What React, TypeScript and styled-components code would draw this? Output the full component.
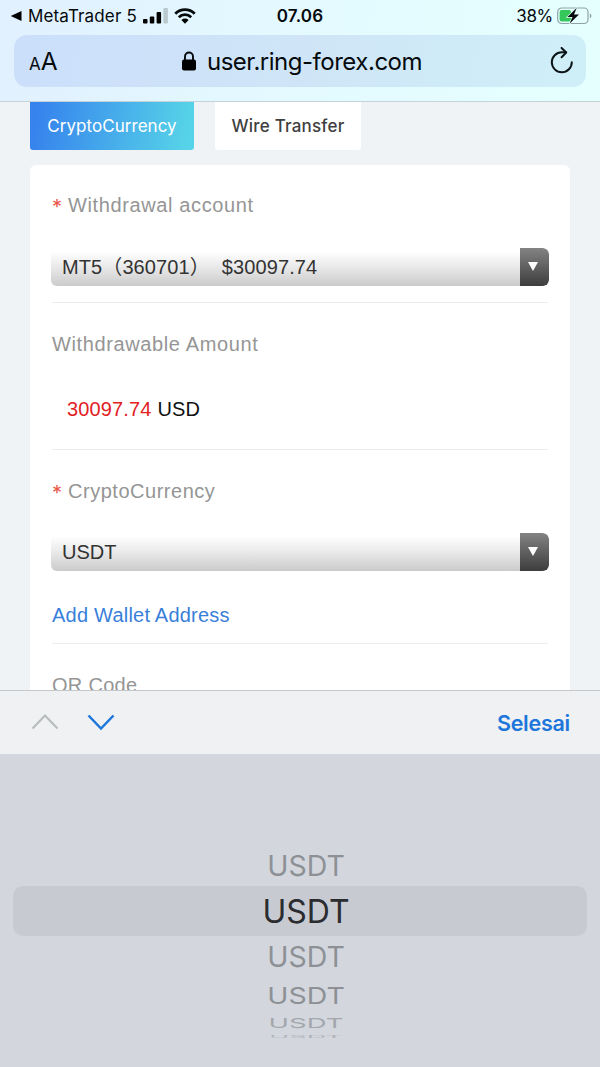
import React from "react";
import styled, { createGlobalStyle } from "styled-components";

const Global = createGlobalStyle`
  * { box-sizing: border-box; }
  body { margin: 0; background: #eff3f5; }
`;

const sans = `"Liberation Sans", "Noto Sans CJK SC", sans-serif`;
const system = `Inter, "Liberation Sans", sans-serif`;

const Screen = styled.div`
  width: 600px;
  height: 1067px;
  display: flex;
  flex-direction: column;
  overflow: hidden;
  background: #eff3f5;
  font-family: ${sans};
`;

const Header = styled.header`
  height: 102px;
  flex: none;
  padding: 0 14px;
  border-bottom: 1px solid #c3d3d9;
  background: linear-gradient(100deg, #e1f0fe 0%, #e3f9ff 45%, #e5fffe 100%);
  font-family: ${system};
  color: #050a0d;
`;

const StatusBar = styled.div`
  height: 35px;
  display: grid;
  grid-template-columns: 1fr auto 1fr;
  align-items: center;
  padding-bottom: 4px;
  margin: 0 -6px 0 -4px;
  font-size: 17px;
`;

const StatusSide = styled.div<{ $end?: boolean }>`
  display: flex;
  align-items: center;
  justify-content: ${(p) => (p.$end ? "flex-end" : "flex-start")};
  gap: ${(p) => (p.$end ? "4px" : "6px")};
  white-space: nowrap;
  letter-spacing: ${(p) => (p.$end ? "-0.3px" : "0.15px")};
`;

const Clock = styled.div`
  font-weight: 600;
  letter-spacing: 0.2px;
  margin-left: -2px;
`;

const AddressBar = styled.div`
  height: 52px;
  display: grid;
  grid-template-columns: 100px 1fr 100px;
  align-items: center;
  border-radius: 13px;
  padding: 0 11px 0 15px;
  background: linear-gradient(95deg, #cbdffb 0%, #cfe5f7 50%, #cfeff8 100%);
`;

const TextSize = styled.div`
  display: flex;
  align-items: baseline;
  font-size: 24.5px;
  letter-spacing: 0;
`;

const SmallA = styled.span`
  font-size: 17px;
`;

const Url = styled.div`
  display: flex;
  align-items: center;
  justify-content: center;
  gap: 11px;
  font-size: 24px;
  letter-spacing: -0.48px;
`;

const Reload = styled.div`
  display: flex;
  justify-content: flex-end;
`;

const Page = styled.main`
  height: 588px;
  flex: none;
  overflow: hidden;
  padding: 0 30px;
`;

const Tabs = styled.div`
  display: flex;
  gap: 21px;
  margin-bottom: 15px;
`;

const Tab = styled.div<{ $active?: boolean; $w: number }>`
  width: ${(p) => p.$w}px;
  height: 48px;
  display: flex;
  align-items: center;
  justify-content: center;
  border-radius: 0 0 3px 3px;
  font-family: ${system};
  font-size: 17px;
  font-weight: ${(p) => (p.$active ? 400 : 500)};
  letter-spacing: ${(p) => (p.$active ? 0.05 : 0.2)}px;
  color: ${(p) => (p.$active ? "#fff" : "#404040")};
  background: ${(p) => (p.$active ? "linear-gradient(100deg, #3683ed 5%, #56d3e8 95%)" : "#fff")};
`;

const Card = styled.section`
  padding: 0 22px;
  border-radius: 6px 6px 0 0;
  background: #fff;
`;

const Field = styled.div<{ $pad?: number }>`
  padding-bottom: ${(p) => p.$pad ?? 16}px;
  border-bottom: 1px solid #ebebeb;
`;

const Label = styled.div<{ $h?: number; $ls?: number }>`
  height: ${(p) => p.$h ?? 82}px;
  display: flex;
  align-items: center;
  gap: 6px;
  font-size: 20px;
  letter-spacing: ${(p) => p.$ls ?? 0.62}px;
  color: #959595;
`;

const Required = styled.span`
  width: 10px;
  padding-top: 3px;
  font-family: ${system};
  letter-spacing: 0;
  color: #e8594c;
`;

const Select = styled.div<{ $mt: number }>`
  height: 38px;
  margin: ${(p) => p.$mt}px -1px 0;
  display: flex;
  justify-content: space-between;
  align-items: center;
  padding-left: 11px;
  border-radius: 6px;
  overflow: hidden;
  white-space: pre;
  font-size: 20px;
  line-height: 24px;
  color: #333;
  background: linear-gradient(#fff 8%, #ececec 45%, #cbcbcb 100%);
`;

const Account = styled.div`
  display: flex;
  align-items: center;
  height: 38px;
  letter-spacing: 0.1px;
`;

const Balance = styled.span`
  margin-left: 12px;
`;

const Arrow = styled.div`
  width: 29px;
  height: 38px;
  display: flex;
  align-items: center;
  justify-content: center;
  padding: 0 4px 2px 0;
  border-radius: 0 6px 6px 0;
  background: linear-gradient(#838383, #3d3d3d);
`;

const Amount = styled.div`
  height: 48px;
  display: flex;
  align-items: center;
  gap: 6px;
  padding: 1px 0 0 15px;
  font-size: 20px;
  letter-spacing: 0.12px;
  color: #111;
`;

const Red = styled.span`
  color: #e2211f;
`;

const Link = styled.div`
  height: 34px;
  margin-top: 27px;
  display: flex;
  align-items: center;
  font-size: 20px;
  letter-spacing: 0.22px;
  color: #397fda;
`;

const Toolbar = styled.div`
  height: 64px;
  flex: none;
  display: flex;
  align-items: center;
  padding: 0 30px 0 31px;
  border-top: 1px solid #c5c8ca;
  background: #eff1f2;
`;

const Steps = styled.div`
  display: flex;
  gap: 28px;
  margin: 0 auto 2px 0;
`;

const Done = styled.div`
  font-family: ${system};
  font-size: 21.5px;
  font-weight: 600;
  letter-spacing: -0.25px;
  color: #1c76db;
`;

const Picker = styled.div`
  flex: 1;
  display: flex;
  flex-direction: column;
  padding: 90px 13px 0;
  background: #d3d7dd;
  font-family: ${system};
`;

const Option = styled.div<{ $h: number; $size?: number; $sy?: number; $color?: string; $on?: boolean }>`
  height: ${(p) => p.$h}px;
  display: flex;
  align-items: center;
  justify-content: center;
  border-radius: 10px;
  font-size: ${(p) => p.$size ?? 28.5}px;
  color: ${(p) => p.$color ?? "#8d9196"};
  background: ${(p) => (p.$on ? "#c8cad2" : "transparent")};
  & > span {
    padding-left: 12px;
    transform: scaleY(${(p) => p.$sy ?? 1});
  }
`;

const Down = () => (
  <Arrow>
    <svg width="10" height="9" viewBox="0 0 10 9"><path d="M0 0h10L5 9z" fill="#fff" /></svg>
  </Arrow>
);

export default function App() {
  return (
    <Screen>
      <Global />
      <Header>
        <StatusBar>
          <StatusSide>
            <svg width="12" height="12" viewBox="0 0 12 12"><path d="M11.5 1v10L.7 6z" /></svg>
            <span>MetaTrader 5</span>
            <svg width="25" height="16" viewBox="0 0 25 16">
              <rect x="0" y="11" width="4.500" height="4.500" rx="1" />
              <rect x="6.800" y="8.500" width="4.500" height="7" rx="1" />
              <rect x="13.600" y="4" width="4.500" height="11.500" rx="1" />
              <rect x="20.400" y="0" width="4.500" height="15.500" rx="1" fill="#b9c9ce" />
            </svg>
            <svg width="22" height="16" viewBox="0 0 22 16">
              <path d="M1.300 5.700a13.800 13.800 0 0 1 19.400 0M4.800 9.200a8.800 8.800 0 0 1 12.400 0" fill="none" stroke="#050a0d" strokeWidth="2.800" />
              <path d="M11 15.700 7.400 12a5.200 5.200 0 0 1 7.200 0z" />
            </svg>
          </StatusSide>
          <Clock>07.06</Clock>
          <StatusSide $end>
            <span>38%</span>
            <svg width="35" height="18" viewBox="0 0 35 18">
              <rect x=".7" y="1" width="30.300" height="15.500" rx="4" fill="none" stroke="#8fa3a6" strokeWidth="1.200" />
              <rect x="2.600" y="3" width="11.400" height="11.500" rx="2" fill="#35c759" />
              <path d="M32.800 6.500c2.200.8 2.200 4 0 4.700z" fill="#8fa3a6" />
              <path d="M19.800.8 10.500 10h5l-3 6.800L22 7.600h-5z" fill="#050a0d" stroke="#e5fffe" strokeWidth="1.400" paintOrder="stroke" />
            </svg>
          </StatusSide>
        </StatusBar>
        <AddressBar>
          <TextSize><SmallA>A</SmallA>A</TextSize>
          <Url>
            <svg width="14" height="20" viewBox="0 0 14 20">
              <rect x="0" y="8.500" width="14" height="11" rx="2" />
              <path d="M3 9V5.500a4 4 0 0 1 8 0V9" fill="none" stroke="#050a0d" strokeWidth="1.900" />
            </svg>
            <span>user.ring-forex.com</span>
          </Url>
          <Reload>
            <svg width="26" height="28" viewBox="0 0 26 28" fill="none" stroke="#0c1418" strokeWidth="2" strokeLinecap="round" strokeLinejoin="round">
              <path d="M22.800 15.200A10 10 0 1 1 12.800 5.300H17" />
              <path d="M12.600 1 17.200 5.500 12.600 10.200" />
            </svg>
          </Reload>
        </AddressBar>
      </Header>
      <Page>
        <Tabs>
          <Tab $active $w={164}>CryptoCurrency</Tab>
          <Tab $w={146}>Wire Transfer</Tab>
        </Tabs>
        <Card>
          <Field>
            <Label $h={80}><Required>*</Required>Withdrawal account</Label>
            <Select $mt={3}><Account><span>MT5（360701）</span><Balance>$30097.74</Balance></Account><Down /></Select>
          </Field>
          <Field>
            <Label>Withdrawable Amount</Label>
            <Amount><Red>30097.74</Red>USD</Amount>
          </Field>
          <Field $pad={11}>
            <Label $ls={0.52}><Required>*</Required>CryptoCurrency</Label>
            <Select $mt={1}><span>USDT</span><Down /></Select>
            <Link>Add Wallet Address</Link>
          </Field>
          <Label $ls={0.3}>QR Code</Label>
        </Card>
      </Page>
      <Toolbar>
        <Steps>
          <svg width="28" height="18" viewBox="0 0 28 18" fill="none" stroke="#b9bcbe" strokeWidth="2.200"><path d="m1.500 15.500 12.500-13 12.500 13" /></svg>
          <svg width="28" height="18" viewBox="0 0 28 18" fill="none" stroke="#1c76db" strokeWidth="2.500"><path d="m1.500 2.500 12.500 13 12.500-13" /></svg>
        </Steps>
        <Done>Selesai</Done>
      </Toolbar>
      <Picker>
        <Option $h={42}><span>USDT</span></Option>
        <Option $h={50} $on $size={32} $color="#2b2c30"><span>USDT</span></Option>
        <Option $h={41}><span>USDT</span></Option>
        <Option $h={36} $sy={0.8}><span>USDT</span></Option>
        <Option $h={19} $sy={0.5} $color="#a3a7ad" $size={27.500}><span>USDT</span></Option>
        <Option $h={8} $sy={0.14} $color="#b0b4ba" $size={27}><span>USDT</span></Option>
      </Picker>
    </Screen>
  );
}
